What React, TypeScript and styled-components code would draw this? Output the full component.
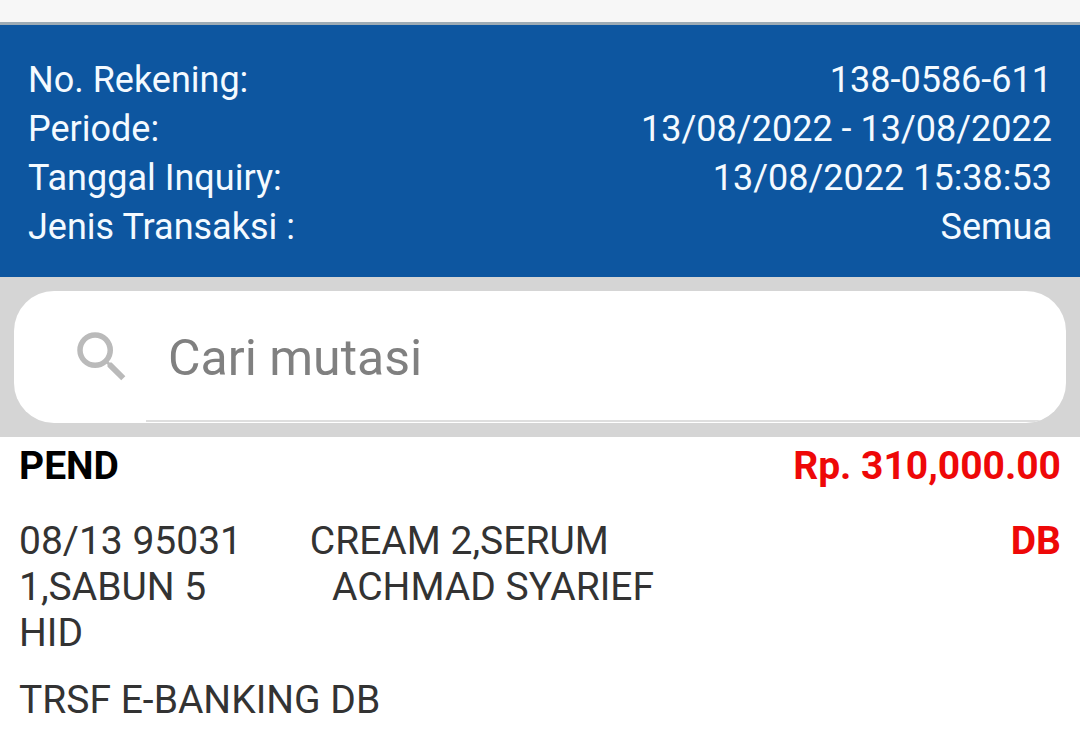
import React from "react";
import styled, { createGlobalStyle } from "styled-components";

const GlobalStyle = createGlobalStyle`
  * { box-sizing: border-box; }
  body { margin: 0; background: #fff; font-family: Roboto, "Liberation Sans", sans-serif; }
`;

const TopStrip = styled.div`
  height: 25px;
  background: #f7f7f7;
  border-bottom: 3px solid #9dabb5;
`;

const AccountHeader = styled.header`
  background: #0d56a0;
  padding: 31px 28px 25px;
`;

const Details = styled.dl`
  margin: 0;
`;

const Detail = styled.div`
  display: flex;
  justify-content: space-between;
  font-size: 36px;
  line-height: 49px;
  color: #f4faff;
`;

const Term = styled.dt`
  margin: 0;
`;

const Value = styled.dd`
  margin: 0;
`;

const SearchBar = styled.form`
  background: #d5d5d5;
  padding: 14px;
`;

const SearchField = styled.label`
  display: flex;
  align-items: stretch;
  height: 132px;
  padding-bottom: 1px;
  border-radius: 40px;
  background: #fff;
  overflow: hidden;
`;

const SearchIcon = styled.svg`
  width: 66px;
  height: 66px;
  margin: 33px 11px 0 55px;
  flex: none;
  fill: #bababa;
`;

const SearchInput = styled.input`
  flex: 1;
  min-width: 0;
  border: 0;
  border-bottom: 2px solid #dedede;
  outline: 0;
  padding: 4px 22px 0;
  background: transparent;
  font-family: inherit;
  font-size: 50px;
  color: #333;
  &::placeholder { color: #808080; opacity: 1; }
`;

const Transaction = styled.article`
  padding: 4px 19px 0;
  font-size: 39px;
  line-height: 46px;
  color: #333;
`;

const Row = styled.div`
  display: flex;
  justify-content: space-between;
  align-items: flex-start;
`;

const Title = styled.h2`
  margin: 0 0 26px;
  font-size: 39px;
  line-height: 51px;
  font-weight: 700;
  color: #000;
`;

const Amount = styled.strong<{ $line?: number }>`
  line-height: ${(p) => p.$line ?? 46}px;
  font-weight: 700;
  color: #ee0808;
`;

const Description = styled.p`
  margin: 0 0 21px;
  white-space: pre-wrap;
`;

const details = [
  ["No. Rekening:", "138-0586-611"],
  ["Periode:", "13/08/2022 - 13/08/2022"],
  ["Tanggal Inquiry:", "13/08/2022 15:38:53"],
  ["Jenis Transaksi :", "Semua"],
];

export default function App() {
  return (
    <>
      <GlobalStyle />
      <TopStrip />
      <AccountHeader>
        <Details>
          {details.map(([term, value]) => (
            <Detail key={term}>
              <Term>{term}</Term>
              <Value>{value}</Value>
            </Detail>
          ))}
        </Details>
      </AccountHeader>
      <SearchBar role="search">
        <SearchField>
          <SearchIcon viewBox="0 0 24 24" aria-hidden="true">
            <path d="M15.5 14h-.79l-.28-.27A6.47 6.47 0 0 0 16 9.5 6.5 6.5 0 1 0 9.5 16c1.61 0 3.09-.59 4.23-1.57l.27.28v.79l5 4.99L20.49 19l-4.99-5zm-6 0C7.01 14 5 11.99 5 9.5S7.01 5 9.5 5 14 7.01 14 9.5 11.99 14 9.5 14z" />
          </SearchIcon>
          <SearchInput type="text" placeholder="Cari mutasi" aria-label="Cari mutasi" />
        </SearchField>
      </SearchBar>
      <Transaction>
        <Row>
          <Title>PEND</Title>
          <Amount $line={51}>Rp. 310,000.00</Amount>
        </Row>
        <Row>
          <Description>{"08/13 95031       CREAM 2,SERUM\n1,SABUN 5             ACHMAD SYARIEF\nHID"}</Description>
          <Amount>DB</Amount>
        </Row>
        <Description>TRSF E-BANKING DB</Description>
      </Transaction>
    </>
  );
}
